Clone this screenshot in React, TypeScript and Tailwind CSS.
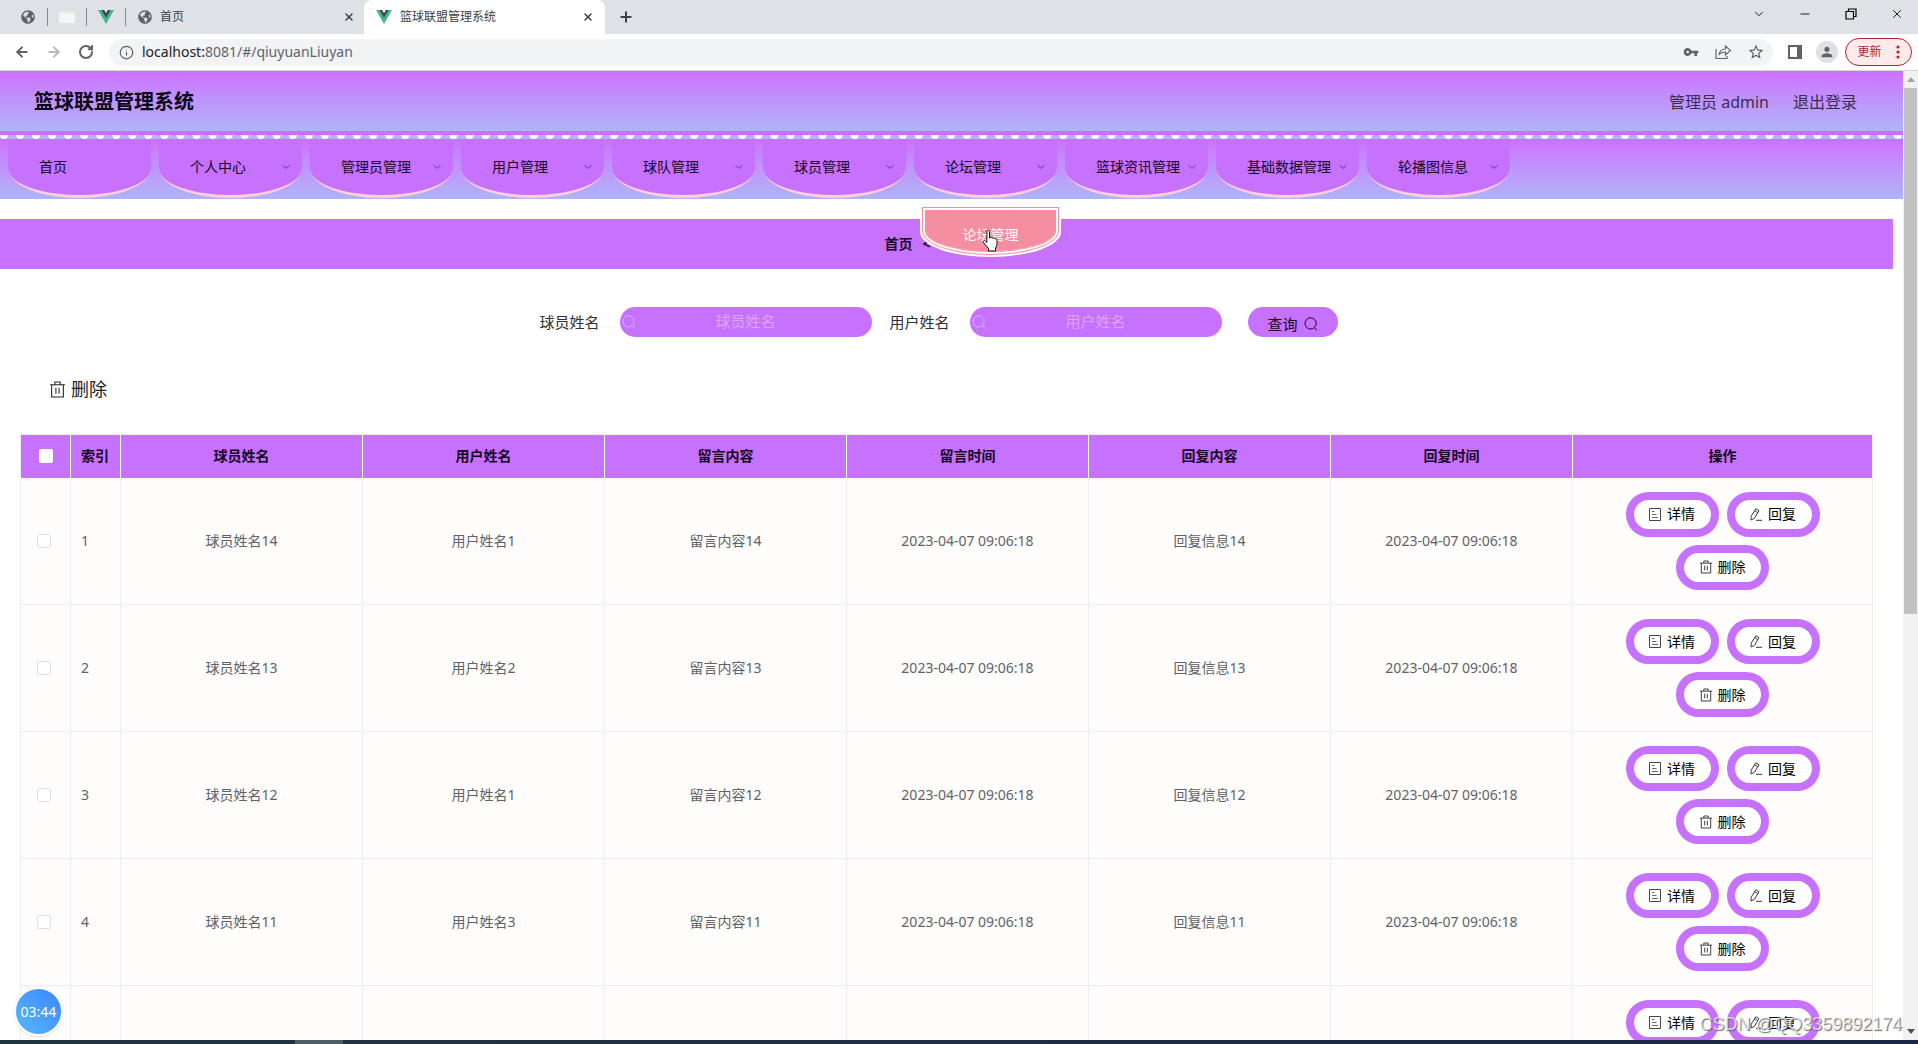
import React from 'react';
import { ArrowLeft, ArrowRight, ChevronDown, Info, Minus, Plus, RotateCw, X } from 'lucide-react';
import { MdOutlineStarBorder, MdVpnKey, MdPerson } from 'react-icons/md';
import { FaGlobeAmericas } from 'react-icons/fa';

interface Message {
    player: string;
    user: string;
    content: string;
    time: string;
    reply: string;
    replyTime: string;
}

const menus = [
    '首页',
    '个人中心',
    '管理员管理',
    '用户管理',
    '球队管理',
    '球员管理',
    '论坛管理',
    '篮球资讯管理',
    '基础数据管理',
    '轮播图信息',
];

const columns = ['球员姓名', '用户姓名', '留言内容', '留言时间', '回复内容', '回复时间'];

const time = '2023-04-07 09:06:18';

const messages: Message[] = [
    { player: '球员姓名14', user: '用户姓名1', content: '留言内容14', time, reply: '回复信息14', replyTime: time },
    { player: '球员姓名13', user: '用户姓名2', content: '留言内容13', time, reply: '回复信息13', replyTime: time },
    { player: '球员姓名12', user: '用户姓名1', content: '留言内容12', time, reply: '回复信息12', replyTime: time },
    { player: '球员姓名11', user: '用户姓名3', content: '留言内容11', time, reply: '回复信息11', replyTime: time },
    { player: '球员姓名10', user: '用户姓名2', content: '留言内容10', time, reply: '回复信息10', replyTime: time },
];

const VueLogo = () => (
    <svg viewBox="0 0 16 14" className="h-[14px] w-4 shrink-0">
        <path d="M0 0h3.2L8 8.3 12.8 0H16L8 14z" fill="#41b883" />
        <path d="M3.2 0h3L8 3.2 9.8 0h3L8 8.3z" fill="#35495e" />
    </svg>
);

const SearchIcon = ({ className }: { className: string }) => (
    <svg viewBox="0 0 14 14" className={className} fill="none" stroke="currentColor">
        <circle cx="6.6" cy="6.4" r="5.6" />
        <path d="M10.4 10.6 13 13.4" />
    </svg>
);

const TrashIcon = ({ className }: { className: string }) => (
    <svg viewBox="0 0 14 16" className={className} fill="none" stroke="currentColor">
        <path d="M0 3.5h14M4.500 3.500V1h5v2.500M1.500 3.500v11.500h11V3.500M5.500 6.500v5.500M8.500 6.500v5.500" />
    </svg>
);

const DocIcon = () => (
    <svg viewBox="0 0 12 13" className="h-[13px] w-3" fill="none" stroke="#444">
        <path d="M.5.5h11v12H.5z" />
        <path d="M3 3.500h2.500M3 6.500h4.500M3 9.500h6" strokeWidth=".8" />
    </svg>
);

const EditIcon = () => (
    <svg viewBox="0 0 12 13" className="h-[13px] w-3" fill="none" stroke="#222">
        <path d="M5.800.8 9 2.600 4.400 10.400 1 12l.2-3.800zM4.700 2.800 7.800 4.600M6 12.300h6" strokeWidth=".9" />
    </svg>
);

const BrowserTabs = () => (
    <div className="flex h-[34px] items-center bg-[#dee1e6] text-xs text-[#3c4043]">
        <div className="flex h-[18px] shrink-0 items-center">
            <span className="flex h-full w-12 items-center justify-center border-r border-[#85888c] pl-2"><FaGlobeAmericas className="size-[14px] text-[#5f6368]" /></span>
            <span className="flex h-full w-[39px] items-center justify-center border-r border-[#85888c]"><span className="h-3 w-4 border-t-2 border-[#e3e8d8] bg-[#f4f5f6]" /></span>
            <span className="flex h-full w-[39px] items-center justify-center border-r border-[#85888c]"><VueLogo /></span>
        </div>
        <div className="flex w-[238px] shrink-0 items-center gap-2 pr-[9px] pl-3">
            <FaGlobeAmericas className="size-[14px] text-[#5f6368]" />
            <span className="flex-1">首页</span>
            <button aria-label="关闭标签页"><X className="size-3" strokeWidth={3} /></button>
        </div>
        <div className="flex h-full w-[241px] shrink-0 items-center gap-2 rounded-t-lg bg-white pr-[11px] pl-3">
            <VueLogo />
            <span className="flex-1">篮球联盟管理系统</span>
            <button aria-label="关闭标签页"><X className="size-3" strokeWidth={3} /></button>
        </div>
        <button aria-label="新标签页" className="ml-[13px]"><Plus className="size-4" strokeWidth={3} /></button>
        <div className="mb-1.5 ml-auto flex items-center gap-8 pr-[14px] text-black">
            <button aria-label="搜索标签页"><ChevronDown className="size-[14px]" strokeWidth={1.5} /></button>
            <button aria-label="最小化"><Minus className="size-[14px]" strokeWidth={1.5} /></button>
            <button aria-label="还原">
                <svg viewBox="0 0 14 14" className="size-[14px]" fill="none" stroke="currentColor" strokeWidth="1.2">
                    <path d="M2 4.500h7.500V12H2zM4.500 4.500V2H12v7.500H9.500" />
                </svg>
            </button>
            <button aria-label="关闭"><X className="size-[14px]" strokeWidth={1.5} /></button>
        </div>
    </div>
);

const AddressBar = () => (
    <div className="flex h-[37px] items-center border-b border-[#d5d7da] bg-white text-[#5f6368]">
        <div className="flex w-[109px] shrink-0 items-center gap-4 pl-[14px]">
            <button aria-label="后退"><ArrowLeft className="size-4" strokeWidth={3} /></button>
            <button aria-label="前进" className="text-[#b9bbbe]"><ArrowRight className="size-4" strokeWidth={3} /></button>
            <button aria-label="刷新"><RotateCw className="size-4" strokeWidth={3} /></button>
        </div>
        <div className="flex h-[27px] min-w-0 flex-1 items-center rounded-full bg-[#f1f3f4] pr-2 pl-[10px]">
            <Info className="size-[15px]" />
            <span className="ml-2 flex-1 text-sm"><span className="text-[#202124]">localhost:</span>8081/#/qiuyuanLiuyan</span>
            <span className="flex items-center gap-4">
                <MdVpnKey className="size-4" />
                <svg viewBox="0 0 16 16" className="size-4" fill="none" stroke="currentColor" strokeWidth="1.2">
                    <path d="M1 5v9.500h11V12M4 11c.5-4 3-6 6.500-6V2l5 4.500-5 4.500V8C8 8 5.500 8.500 4 11z" />
                </svg>
                <MdOutlineStarBorder className="size-[18px]" />
            </span>
        </div>
        <div className="flex shrink-0 items-center pr-[6px] pl-[15px]">
            <svg viewBox="0 0 14 14" className="size-[14px]">
                <path d="M1 1h12v12H1z" fill="none" stroke="currentColor" strokeWidth="2" />
                <path d="M9 1h4v12H9z" fill="currentColor" />
            </svg>
            <span className="ml-[14px] flex size-[22px] items-center justify-center rounded-full bg-[#dee1e6]"><MdPerson className="size-4" /></span>
            <button className="ml-[7px] flex h-7 w-[67px] items-center justify-center gap-[14px] rounded-full border border-[#b3262e] bg-[#fcebea] text-xs text-[#b3262e]">
                更新
                <svg viewBox="0 0 4 14" className="h-[14px] w-1" fill="currentColor">
                    <circle cx="2" cy="2" r="1.600" />
                    <circle cx="2" cy="7" r="1.600" />
                    <circle cx="2" cy="12" r="1.600" />
                </svg>
            </button>
        </div>
    </div>
);

const Header = () => (
    <header>
        <div className="flex h-[60px] items-center justify-between bg-linear-to-b from-[#cc70ff] to-[#aeb4f8] pt-0.5 pr-[46px] pl-[34px]">
            <h1 className="text-xl font-bold text-[#0c0414]">篮球联盟管理系统</h1>
            <div className="flex gap-6 text-base text-[#3d2c52]">
                <span>管理员 admin</span>
                <a href="#/login">退出登录</a>
            </div>
        </div>
        {/* scalloped edge: lower half of a dotted border */}
        <div className="h-1 bg-[#c771ff]" />
        <div className="h-1 overflow-hidden bg-[#b4b2f9]">
            <div className="-mt-1 border-b-8 border-dotted border-white" />
        </div>
    </header>
);

const SubMenu = () => (
    <div className="absolute top-[68px] left-[6px] z-10 w-[141px] rounded-b-[50%] bg-white px-0.5 pb-0.5">
        <a href="#/luntan" className="flex h-12 items-center justify-center rounded-b-[50%] border-4 border-double border-[#f58ea0] bg-[#f58ea0] bg-clip-padding pt-2 text-sm text-white">
            论坛管理
        </a>
        <svg viewBox="0 0 18 24" className="absolute top-[22px] left-[62px] h-6 w-[18px]" fill="#fff" stroke="#111" strokeLinejoin="round">
            <path d="M5 1.500c1-1 2.500-.5 2.500 1V9c.5-1 2.500-1 2.700.3.6-.8 2.300-.6 2.500.6.8-.7 2.300-.2 2.300 1.100 0 4 .2 5.500-1.500 8v3H6.500v-2.500C4.500 17 3 15.500 1.500 13.500c-1-1.500.8-2.700 2-1.500l1.300 1.500z" />
        </svg>
    </div>
);

const Nav = () => (
    <nav className="h-[60px] bg-linear-to-b from-[#cc70ff] to-[#aeb4f8] pl-2">
        <ul className="flex gap-2">
            {menus.map((item, i) => (
                <li key={item} className="relative">
                    <button className="flex h-[59px] w-[143px] items-center justify-between rounded-b-[50%] border-b-3 border-[#ffcfdb] bg-[#c771ff] pr-[10px] pl-[31px] text-sm text-[#14061f]">
                        {item}
                        {i > 0 && <ChevronDown className="size-3 text-[#5d3a80]" strokeWidth={2} />}
                    </button>
                    {item === '论坛管理' && <SubMenu />}
                </li>
            ))}
        </ul>
    </nav>
);

const SearchForm = () => (
    <form className="mt-[38px] flex h-[30px] items-center justify-center pr-4 text-[15px] text-[#303133]">
        {['球员姓名', '用户姓名'].map((label) => (
            <label key={label} className="mr-[18px] flex items-center gap-5">
                {label}
                <span className="relative flex">
                    <SearchIcon className="absolute top-2 left-[2px] size-[14px] text-[#dcb4f7]" />
                    <input
                        placeholder={label}
                        className="h-[30px] w-[252px] rounded-full bg-[#c771ff] pb-0.5 text-center placeholder:text-[#dca6f4]"
                    />
                </span>
            </label>
        ))}
        <button type="button" className="ml-2 flex h-[30px] w-[90px] items-center justify-center gap-1.5 rounded-full bg-[#c771ff] pt-1 text-[#14061f]">
            查询
            <SearchIcon className="size-[14px]" />
        </button>
    </form>
);

const actionClass = 'flex h-[45px] w-[93px] items-center justify-center gap-1.5 rounded-full border-8 border-[#c771ff] bg-white text-sm text-black';

const MessageTable = () => (
    <table className="mt-[31px] w-full table-fixed border-collapse border border-[#ebeef5] text-sm text-[#606266]">
        <colgroup>
            <col className="w-[50px]" />
            <col className="w-[50px]" />
            {columns.map((c) => <col key={c} />)}
            <col className="w-[300px]" />
        </colgroup>
        <thead>
            <tr className="h-[43px] bg-[#c771ff] text-[#14061f]">
                <th className="border-r border-white">
                    <input type="checkbox" aria-label="全选" className="mx-auto block size-[14px] appearance-none rounded-[2px] bg-white" />
                </th>
                <th className="border-r border-white pl-[10px] text-left">索引</th>
                {columns.map((c) => <th key={c} className="border-r border-white">{c}</th>)}
                <th>操作</th>
            </tr>
        </thead>
        <tbody>
            {messages.map((m, i) => (
                <tr key={m.player} className="h-[127px] border-b border-[#ebeef5] bg-[#fffcfc] text-center">
                    <td className="border-r border-[#ebeef5] pr-1">
                        <input type="checkbox" aria-label={`选择${m.player}`} className="mx-auto block size-[14px] appearance-none rounded-[2px] border border-[#dcdfe6] bg-white" />
                    </td>
                    <td className="border-r border-[#ebeef5] pl-[10px] text-left">{i + 1}</td>
                    <td className="border-r border-[#ebeef5]">{m.player}</td>
                    <td className="border-r border-[#ebeef5]">{m.user}</td>
                    <td className="border-r border-[#ebeef5]">{m.content}</td>
                    <td className="border-r border-[#ebeef5]">{m.time}</td>
                    <td className="border-r border-[#ebeef5]">{m.reply}</td>
                    <td className="border-r border-[#ebeef5]">{m.replyTime}</td>
                    <td>
                        <div className="flex flex-wrap justify-center gap-2 px-10">
                            <button className={actionClass}><DocIcon />详情</button>
                            <button className={actionClass}><EditIcon />回复</button>
                            <button className={actionClass}><TrashIcon className="h-[14px] w-3 text-[#222]" />删除</button>
                        </div>
                    </td>
                </tr>
            ))}
        </tbody>
    </table>
);

const Scrollbar = () => (
    <div className="flex w-[15px] shrink-0 flex-col items-center justify-between bg-[#f1f1f1]">
        <div className="flex h-[56%] w-full flex-col items-center">
            <svg viewBox="0 0 8 5" className="my-[6px] h-[5px] w-2 shrink-0"><path d="M0 5 4 0l4 5z" fill="#a3a3a3" /></svg>
            <div className="w-[13px] flex-1 bg-[#c1c1c1]" />
        </div>
        <svg viewBox="0 0 8 5" className="mb-[6px] h-[5px] w-2"><path d="M0 0h8L4 5z" fill="#505050" /></svg>
    </div>
);

const App: React.FC = () => {
    return (
        <div className="relative flex h-screen flex-col overflow-hidden bg-white font-['Noto_Sans','Noto_Sans_CJK_SC',sans-serif]">
            <BrowserTabs />
            <AddressBar />
            <div className="flex min-h-0 flex-1">
                <div className="min-w-0 flex-1 overflow-hidden">
                    <Header />
                    <Nav />
                    <div className="mt-5 mr-[10px] flex h-[50px] items-center justify-center bg-[#c771ff] text-sm font-bold text-[#14061f]">
                        <div className="flex w-[124px] gap-[10px]">
                            <a href="#/">首页</a>
                            <span>&lt;</span>
                        </div>
                    </div>
                    <main className="pr-[30px] pl-5">
                        <SearchForm />
                        <button className="mt-[38px] ml-[30px] flex items-center gap-[6px] text-lg leading-7 text-[#222]">
                            <TrashIcon className="h-[17px] w-[15px]" />
                            删除
                        </button>
                        <MessageTable />
                    </main>
                </div>
                <Scrollbar />
            </div>
            <div className="h-1 shrink-0 bg-linear-to-r from-[#1f3540] to-[#1a2744]">
                <div className="ml-[295px] h-full w-12 bg-[#4c6068]" />
            </div>

            <div className="absolute bottom-2 left-[14px] flex size-[49px] items-center justify-center rounded-full border-2 border-white bg-linear-to-tr from-[#58b8ff] to-[#3d86f8] text-sm text-white shadow">
                03:44
            </div>
            <div className="pointer-events-none absolute right-4 bottom-2 font-['Liberation_Sans','Noto_Sans_CJK_SC',sans-serif] text-lg leading-6 text-white/70 [text-shadow:1px_1px_1px_#666]">
                CSDN @QQ3359892174
            </div>
        </div>
    );
};

export default App;
